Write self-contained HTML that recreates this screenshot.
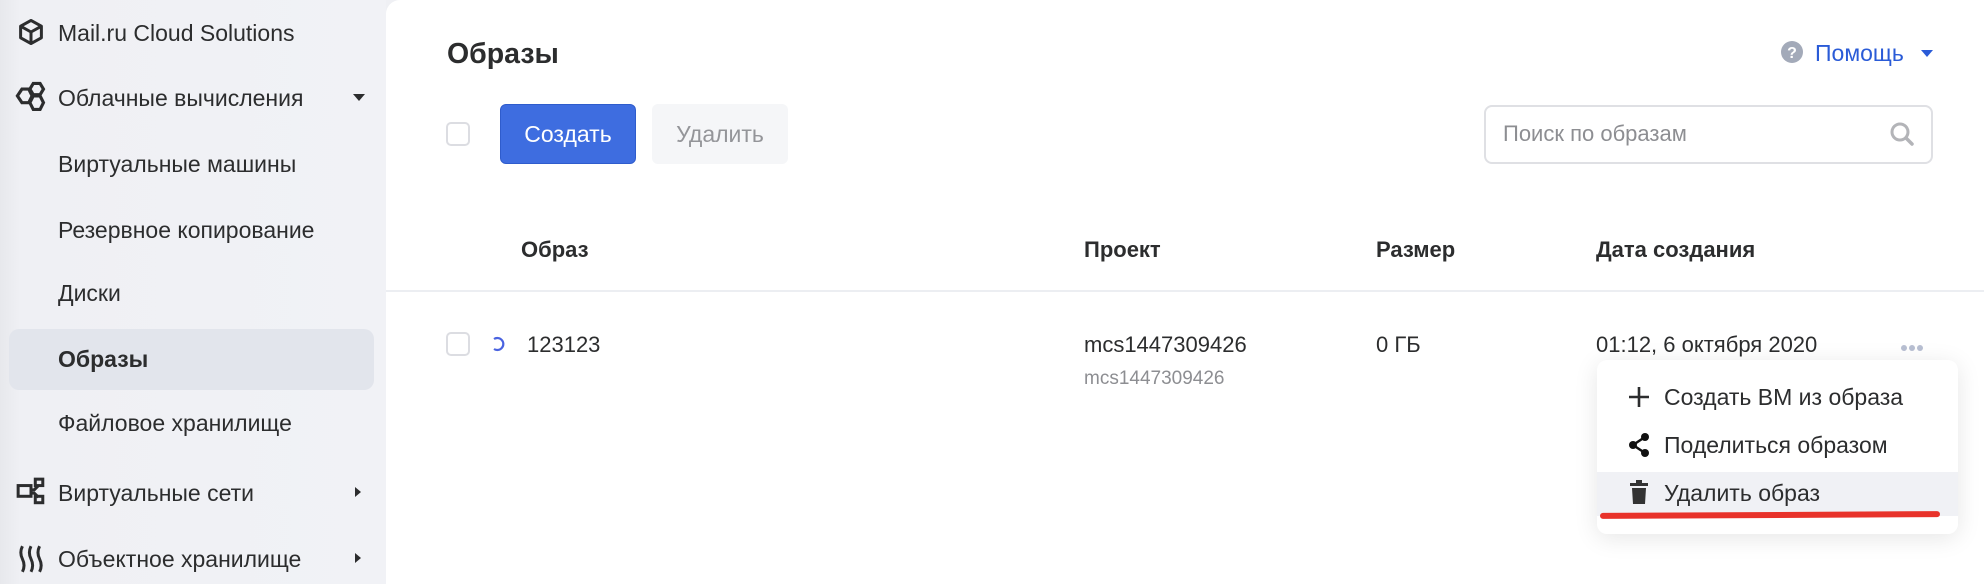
<!DOCTYPE html>
<html><head><meta charset="utf-8"><style>
*{box-sizing:border-box;margin:0;padding:0}
body{width:1984px;height:584px;overflow:hidden;background:#eff0f4;font-family:"Liberation Sans",sans-serif;color:#2c2d2e;position:relative}
.sb{position:absolute;left:0;top:0;width:386px;height:584px;background:linear-gradient(90deg,#e7e8ec 0,#eff0f4 20px,#f1f2f6 100%)}
.it{position:absolute;left:58px;font-size:23px;line-height:26px;color:#2c2d2e;white-space:nowrap}
.ic{position:absolute;left:16px}
.arr{position:absolute;left:353px;width:0;height:0}
.main{position:absolute;left:386px;top:0;width:1598px;height:584px;background:#fff;border-top-left-radius:14px}
.a{position:absolute;white-space:nowrap}
.cb{position:absolute;width:24px;height:24px;border:2px solid #dcdde2;border-radius:5px;background:#fff}
.h{font-weight:bold;font-size:22px;top:237px}
.menu{position:absolute;left:1597px;top:360px;width:361px;height:174px;background:#fff;border-radius:10px;box-shadow:0 4px 24px rgba(0,0,0,.10)}
.mi{position:absolute;left:67px;font-size:23px;color:#2c2d2e}
</style></head><body>
<div class="sb">
  <svg class="ic" style="top:17px" width="30" height="30" viewBox="0 0 26 26"><path d="M13 3 L22 8 L22 18 L13 23 L4 18 L4 8 Z M4 8 L13 13 L22 8 M13 13 L13 23" fill="none" stroke="#2c2d2e" stroke-width="2.6" stroke-linejoin="round"/></svg>
  <div class="it" style="top:20px">Mail.ru Cloud Solutions</div>
  <svg class="ic" style="top:80px;left:14px" width="34" height="34" viewBox="0 0 30 30"><g fill="none" stroke="#2c2d2e" stroke-width="2.8"><path d="M3 14 l4-6 h6 l3 6 l-3 6 h-6 z"/><path d="M14 8 l3-5 h6 l3 5 l-3 5 h-6 z"/><path d="M14 20 l3-6 h6 l3 6 l-3 6 h-6 z"/></g></svg>
  <div class="it" style="top:85px">Облачные вычисления</div>
  <div class="arr" style="top:94px;border-left:6px solid transparent;border-right:6px solid transparent;border-top:7px solid #2c2d2e"></div>
  <div class="it" style="top:151px">Виртуальные машины</div>
  <div class="it" style="top:217px">Резервное копирование</div>
  <div class="it" style="top:280px">Диски</div>
  <div style="position:absolute;left:9px;top:329px;width:365px;height:61px;background:#e2e5ec;border-radius:10px"></div>
  <div class="it" style="top:346px;font-weight:bold">Образы</div>
  <div class="it" style="top:410px">Файловое хранилище</div>
  <svg class="ic" style="top:477px" width="30" height="30" viewBox="0 0 28 28"><g fill="none" stroke="#2c2d2e" stroke-width="2.8"><rect x="2" y="8" width="12" height="10"/><rect x="18" y="2" width="7" height="6"/><rect x="18" y="18" width="7" height="6"/><path d="M14 12 h3 l4-4 M14 15 h3 l4 4"/></g></svg>
  <div class="it" style="top:480px">Виртуальные сети</div>
  <div class="arr" style="top:487px;left:355px;border-top:5px solid transparent;border-bottom:5px solid transparent;border-left:6px solid #2c2d2e"></div>
  <svg class="ic" style="top:544px" width="30" height="30" viewBox="0 0 28 28"><g fill="none" stroke="#2c2d2e" stroke-width="2.8"><path d="M6 2 q-3 6 0 12 q3 6 0 12 M14 2 q-3 6 0 12 q3 6 0 12 M22 2 q-3 6 0 12 q3 6 0 12"/></g></svg>
  <div class="it" style="top:546px">Объектное хранилище</div>
  <div class="arr" style="top:553px;left:355px;border-top:5px solid transparent;border-bottom:5px solid transparent;border-left:6px solid #2c2d2e"></div>
</div>
<div class="main"></div>
<div class="a" style="left:447px;top:38px;font-size:28.5px;font-weight:bold">Образы</div>
<svg class="a" style="left:1780px;top:40px" width="24" height="24" viewBox="0 0 24 24"><circle cx="12" cy="12" r="11" fill="#a3aab9"/><text x="12" y="18" text-anchor="middle" font-family="Liberation Sans" font-weight="bold" font-size="16" fill="#fff">?</text></svg>
<div class="a" style="left:1815px;top:40px;font-size:23px;color:#2a5bd7">Помощь</div>
<div class="a" style="left:1921px;top:50px;border-left:6px solid transparent;border-right:6px solid transparent;border-top:7px solid #2a5bd7"></div>
<div class="cb" style="left:446px;top:122px"></div>
<div class="a" style="left:500px;top:104px;width:136px;height:60px;background:#3e6de0;border:1px solid #2f5ccc;border-radius:6px;color:#fff;font-size:23px;line-height:58px;text-align:center">Создать</div>
<div class="a" style="left:652px;top:104px;width:136px;height:60px;background:#f5f6f8;border-radius:6px;color:#949599;font-size:23px;line-height:60px;text-align:center">Удалить</div>
<div class="a" style="left:1484px;top:105px;width:449px;height:59px;border:2px solid #dfe0e4;border-radius:8px"></div>
<div class="a" style="left:1503px;top:121px;font-size:22px;color:#8d8e92">Поиск по образам</div>
<svg class="a" style="left:1888px;top:120px" width="28" height="28" viewBox="0 0 28 28"><circle cx="12" cy="12" r="8" fill="none" stroke="#b3b4b8" stroke-width="3"/><path d="M18 18 l6 6" stroke="#b3b4b8" stroke-width="3.5" stroke-linecap="round"/></svg>
<div class="a h" style="left:521px">Образ</div>
<div class="a h" style="left:1084px">Проект</div>
<div class="a h" style="left:1376px">Размер</div>
<div class="a h" style="left:1596px">Дата создания</div>
<div class="a" style="left:386px;top:290px;width:1598px;height:2px;background:#eceef2"></div>
<div class="cb" style="left:446px;top:332px"></div>
<svg class="a" style="left:490px;top:336px" width="16" height="16" viewBox="0 0 16 16"><path d="M4 3 A6 6 0 1 1 4 13" fill="none" stroke="#4a63e0" stroke-width="2.2"/></svg>
<div class="a" style="left:527px;top:332px;font-size:22px">123123</div>
<div class="a" style="left:1084px;top:332px;font-size:22px">mcs1447309426</div>
<div class="a" style="left:1084px;top:368px;font-size:19px;color:#8d8e92">mcs1447309426</div>
<div class="a" style="left:1376px;top:332px;font-size:22px">0 ГБ</div>
<div class="a" style="left:1596px;top:332px;font-size:22px">01:12, 6 октября 2020</div>
<svg class="a" style="left:1900px;top:344px" width="24" height="8"><circle cx="4" cy="4" r="3" fill="#b8bfd2"/><circle cx="12" cy="4" r="3" fill="#b8bfd2"/><circle cx="20" cy="4" r="3" fill="#b8bfd2"/></svg>
<div class="menu">
  <svg class="a" style="left:29px;top:24px" width="26" height="26"><path d="M13 3 V23 M3 13 H23" stroke="#2c2d2e" stroke-width="2.6"/></svg>
  <div class="mi" style="top:24px">Создать ВМ из образа</div>
  <svg class="a" style="left:30px;top:72px" width="24" height="26"><g fill="#111"><circle cx="18" cy="5" r="4"/><circle cx="6" cy="13" r="4"/><circle cx="18" cy="21" r="4"/></g><path d="M18 5 L6 13 L18 21" stroke="#111" stroke-width="2.5" fill="none"/></svg>
  <div class="mi" style="top:72px">Поделиться образом</div>
  <div class="a" style="left:0;top:112px;width:361px;height:44px;background:#f0f1f5"></div>
  <svg class="a" style="left:32px;top:120px" width="20" height="26"><rect x="1" y="3" width="18" height="3" fill="#333"/><rect x="7" y="0" width="6" height="4" fill="#333"/><path d="M3 8 H17 L16 24 H4 Z" fill="#333"/></svg>
  <div class="mi" style="top:120px">Удалить образ</div>
  <div class="a" style="left:3px;top:152px;width:340px;height:6px;background:#e8322a;border-radius:3px;transform:rotate(-0.3deg)"></div>
</div>
</body></html>
